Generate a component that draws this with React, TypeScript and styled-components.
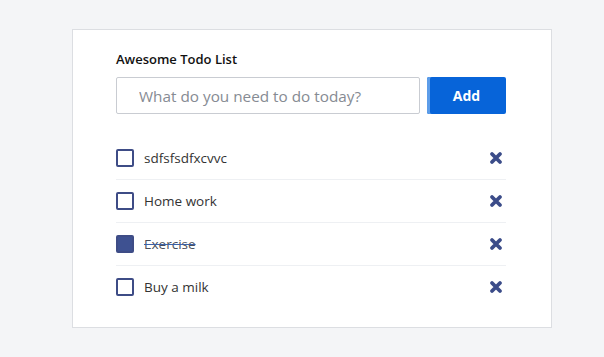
import React from "react";
import styled, { createGlobalStyle } from "styled-components";

const GlobalStyle = createGlobalStyle`
    html, body {
        margin: 0;
        padding: 0;
        background: #f4f5f7;
        font-family: "Open Sans", "Noto Sans", sans-serif;
    }
`;

const Page = styled.div`
    padding: 29px 0 0 72px;
`;

const Card = styled.div`
    box-sizing: border-box;
    width: 480px;
    height: 299px;
    background: #fff;
    border: 1px solid #dcdee2;
    padding: 20px 45px 0 43px;
`;

const Title = styled.h1`
    margin: 0 0 9px 0;
    font-size: 13px;
    line-height: 18px;
    font-weight: 600;
    color: #111;
`;

const Form = styled.form`
    display: flex;
    gap: 7px;
    height: 37px;
`;

const TextInput = styled.input`
    box-sizing: border-box;
    flex: 1;
    height: 37px;
    border: 1px solid #c9ccd2;
    border-radius: 2px;
    padding: 0 22px;
    font-family: inherit;
    font-size: 15.3px;
    color: #333;
    outline: none;

    &::placeholder {
        color: #868b93;
    }
`;

const AddButton = styled.button`
    width: 79px;
    height: 37px;
    border: none;
    border-radius: 2px;
    background: #0764d9;
    box-shadow: inset 3px 0 0 #5d9de9;
    color: #fff;
    font-family: inherit;
    font-size: 14px;
    font-weight: 700;
    cursor: pointer;
`;

const List = styled.ul`
    list-style: none;
    margin: 23px 0 0 0;
    padding: 0;
`;

const Row = styled.li<{ $last?: boolean }>`
    display: flex;
    align-items: center;
    height: 42px;
    border-bottom: 1px solid ${(p) => (p.$last ? "transparent" : "#eef0f3")};
`;

const Box = styled.span<{ $checked: boolean }>`
    box-sizing: border-box;
    width: 18px;
    height: 18px;
    border: 2px solid #3e4c86;
    border-radius: 2px;
    background: ${(p) => (p.$checked ? "#3e5191" : "#fff")};
    margin-right: 10px;
    flex-shrink: 0;
`;

const Label = styled.span<{ $done: boolean }>`
    flex: 1;
    font-size: 13.5px;
    color: ${(p) => (p.$done ? "#4a4f5c" : "#333")};
    text-decoration: ${(p) => (p.$done ? "line-through" : "none")};
    text-decoration-color: #3d62a8;
    text-decoration-thickness: 1px;
`;

const Remove = styled.button`
    border: none;
    background: none;
    padding: 0;
    margin-right: 3px;
    width: 14px;
    height: 14px;
    display: flex;
    cursor: pointer;
`;

const todos = [
    { text: "sdfsfsdfxcvvc", done: false },
    { text: "Home work", done: false },
    { text: "Exercise", done: true },
    { text: "Buy a milk", done: false },
];

const CrossIcon = () => (
    <svg width="14" height="14" viewBox="0 0 14 14">
        <path d="M3 3 L11 11 M11 3 L3 11" stroke="#3b4c89" strokeWidth="3.8" strokeLinecap="round" />
    </svg>
);

const App = () => {
    return (
        <Page>
            <GlobalStyle />
            <Card>
                <Title>Awesome Todo List</Title>
                <Form onSubmit={(e) => e.preventDefault()}>
                    <TextInput type="text" placeholder="What do you need to do today?" />
                    <AddButton type="submit">Add</AddButton>
                </Form>
                <List>
                    {todos.map((t, i) => (
                        <Row key={t.text} $last={i === todos.length - 1}>
                            <Box $checked={t.done} />
                            <Label $done={t.done}>{t.text}</Label>
                            <Remove aria-label="delete">
                                <CrossIcon />
                            </Remove>
                        </Row>
                    ))}
                </List>
            </Card>
        </Page>
    );
};

export default App;
